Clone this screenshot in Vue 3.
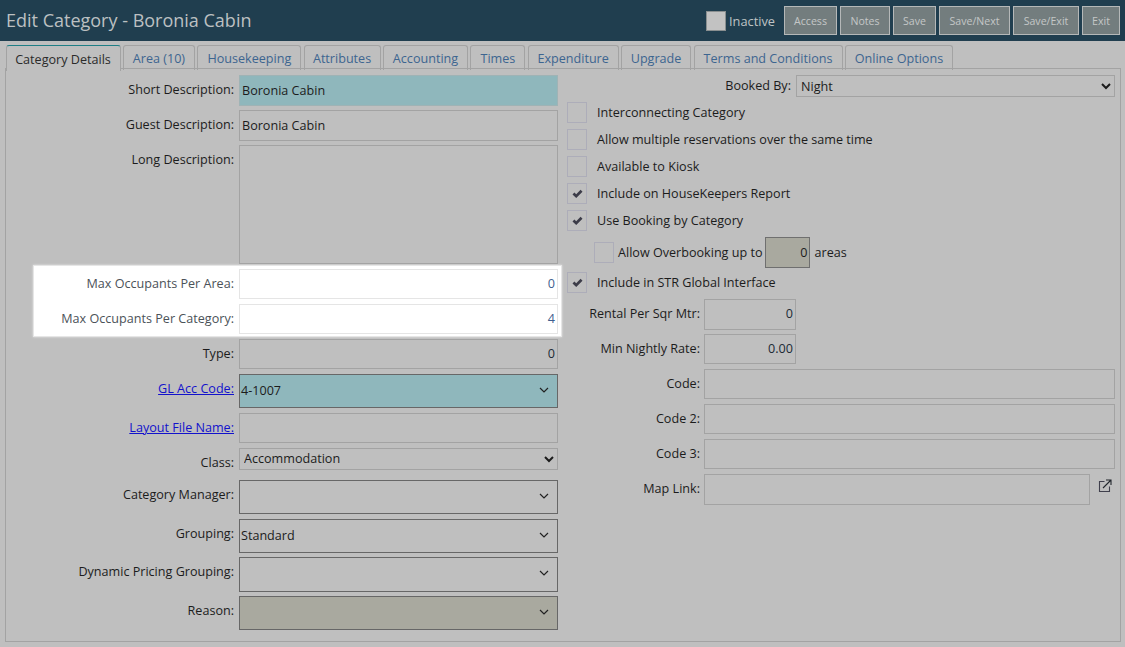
<script setup>
const buttons = [
  { t: 'Access', w: 53 },
  { t: 'Notes', w: 50 },
  { t: 'Save', w: 43 },
  { t: 'Save/Next', w: 71 },
  { t: 'Save/Exit', w: 66 },
  { t: 'Exit', w: 38 }
]
const tabs = [
  { t: 'Category Details', w: 115, active: true },
  { t: 'Area (10)', w: 72.5 },
  { t: 'Housekeeping', w: 104 },
  { t: 'Attributes', w: 77 },
  { t: 'Accounting', w: 85.5 },
  { t: 'Times', w: 55 },
  { t: 'Expenditure', w: 91 },
  { t: 'Upgrade', w: 70.5 },
  { t: 'Terms and Conditions', w: 149 },
  { t: 'Online Options', w: 108.5 }
]
const checks = [
  { t: 'Interconnecting Category', on: false },
  { t: 'Allow multiple reservations over the same time', on: false },
  { t: 'Available to Kiosk', on: false },
  { t: 'Include on HouseKeepers Report', on: true },
  { t: 'Use Booking by Category', on: true }
]
const checkPath = 'M0.5 6 L2.6 3.8 L4.6 5.8 L9.4 0.8 L11.5 3 L4.6 10 Z'
</script>

<template>
  <div class="page">
    <header class="topbar">
      <h1 class="title">Edit Category - Boronia Cabin</h1>
      <div class="actions">
        <span class="inactive-box"></span>
        <span class="inactive-label">Inactive</span>
        <button
          v-for="b in buttons"
          :key="b.t"
          class="btn"
          :style="{ width: b.w + 'px' }"
        >{{ b.t }}</button>
      </div>
    </header>

    <nav class="tabs">
      <a
        v-for="tab in tabs"
        :key="tab.t"
        class="tab"
        :class="{ active: tab.active }"
        :style="{ width: tab.w + 'px' }"
      >{{ tab.t }}</a>
    </nav>

    <main class="panel">
      <section class="col-left">
        <div class="row h31 mb4">
          <label class="lbl">Short Description:</label>
          <div class="field teal-soft txt">Boronia Cabin</div>
        </div>
        <div class="row h31 mb4">
          <label class="lbl">Guest Description:</label>
          <div class="field txt">Boronia Cabin</div>
        </div>
        <div class="row h119">
          <label class="lbl">Long Description:</label>
          <div class="field"></div>
        </div>

        <div class="highlight">
          <div class="row h30 mb5">
            <label class="lbl">Max Occupants Per Area:</label>
            <div class="field num">0</div>
          </div>
          <div class="row h30">
            <label class="lbl">Max Occupants Per Category:</label>
            <div class="field num">4</div>
          </div>
        </div>

        <div class="row h30 mb5">
          <label class="lbl">Type:</label>
          <div class="field num">0</div>
        </div>
        <div class="row h34 mb5">
          <label class="lbl"><a class="link">GL Acc Code:</a></label>
          <div class="combo teal">
            <span class="combo-text">4-1007</span>
            <svg class="chev" viewBox="0 0 10 6"><path d="M1 1 L5 5 L9 1" /></svg>
          </div>
        </div>
        <div class="row h30 mb5">
          <label class="lbl"><a class="link">Layout File Name:</a></label>
          <div class="field"></div>
        </div>
        <div class="row h22 mb10">
          <label class="lbl">Class:</label>
          <select class="native class-sel">
            <option>Accommodation</option>
          </select>
        </div>
        <div class="row h34 mb5">
          <label class="lbl">Category Manager:</label>
          <div class="combo">
            <svg class="chev" viewBox="0 0 10 6"><path d="M1 1 L5 5 L9 1" /></svg>
          </div>
        </div>
        <div class="row h34 mb4">
          <label class="lbl">Grouping:</label>
          <div class="combo">
            <span class="combo-text">Standard</span>
            <svg class="chev" viewBox="0 0 10 6"><path d="M1 1 L5 5 L9 1" /></svg>
          </div>
        </div>
        <div class="row h35 mb4">
          <label class="lbl">Dynamic Pricing Grouping:</label>
          <div class="combo">
            <svg class="chev" viewBox="0 0 10 6"><path d="M1 1 L5 5 L9 1" /></svg>
          </div>
        </div>
        <div class="row h34">
          <label class="lbl">Reason:</label>
          <div class="combo khaki">
            <svg class="chev" viewBox="0 0 10 6"><path d="M1 1 L5 5 L9 1" /></svg>
          </div>
        </div>
      </section>

      <section class="col-right">
        <div class="booked">
          <label class="booked-lbl">Booked By:</label>
          <select class="native booked-sel">
            <option>Night</option>
          </select>
        </div>

        <div v-for="c in checks" :key="c.t" class="check-row">
          <span class="box">
            <svg v-if="c.on" class="tick" viewBox="0 0 12 11"><path :d="checkPath" /></svg>
          </span>
          <span class="check-text">{{ c.t }}</span>
        </div>

        <div class="over-row">
          <span class="box"></span>
          <span class="over-text">Allow Overbooking up to</span>
          <div class="over-input">0</div>
          <span class="over-after">areas</span>
        </div>

        <div class="check-row str">
          <span class="box">
            <svg class="tick" viewBox="0 0 12 11"><path :d="checkPath" /></svg>
          </span>
          <span class="check-text">Include in STR Global Interface</span>
        </div>

        <div class="rrow h31 mb4">
          <label class="rlbl">Rental Per Sqr Mtr:</label>
          <div class="field num short">0</div>
        </div>
        <div class="rrow h30 mb5">
          <label class="rlbl">Min Nightly Rate:</label>
          <div class="field num short">0.00</div>
        </div>
        <div class="rrow h30 mb5">
          <label class="rlbl">Code:</label>
          <div class="field wide"></div>
        </div>
        <div class="rrow h30 mb5">
          <label class="rlbl">Code 2:</label>
          <div class="field wide"></div>
        </div>
        <div class="rrow h30 mb5">
          <label class="rlbl">Code 3:</label>
          <div class="field wide"></div>
        </div>
        <div class="rrow h31">
          <label class="rlbl">Map Link:</label>
          <div class="field map"></div>
          <svg class="ext" viewBox="0 0 14 14">
            <path class="ext-box" d="M6.5 2.5 H1.5 V12.5 H11.5 V7.5" />
            <path class="ext-arrow" d="M5 9 L12.5 1.5 M8 1 H13 V6" />
          </svg>
        </div>
      </section>
    </main>
  </div>
</template>

<style>
html, body { margin: 0; background: #bfbfbf; }
</style>

<style scoped>
.page {
  width: 1125px;
  height: 647px;
  overflow: hidden;
  background: #bfbfbf;
  font-family: "Open Sans", "Liberation Sans", sans-serif;
  font-size: 12.6px;
  color: #1c1c1c;
}
.topbar {
  height: 41px;
  background: #203e4f;
  display: flex;
  align-items: flex-start;
  justify-content: space-between;
}
.title {
  margin: 0;
  padding: 7px 0 0 6px;
  font-size: 18px;
  line-height: 26px;
  font-weight: 400;
  color: #bcc0c2;
}
.actions {
  display: flex;
  align-items: center;
  padding: 6px 5px 0 0;
}
.inactive-box {
  width: 18px;
  height: 18px;
  border: 1px solid #8a8f90;
  background: #c2c2c2;
}
.inactive-label {
  width: 46px;
  margin: 0 9px 0 3px;
  color: #bfc3c4;
  font-size: 12.8px;
  line-height: 20px;
  white-space: nowrap;
}
.btn {
  box-sizing: border-box;
  height: 29px;
  margin-left: 3px;
  padding: 0;
  border: 1px solid #b5b8b8;
  background: #737d7e;
  color: #c4c7c7;
  font: 400 10.6px "Open Sans", sans-serif;
}
.btn:first-of-type { margin-left: 0; }
.tabs {
  display: flex;
  gap: 2.2px;
  height: 28px;
  padding: 4px 0 0 5.5px;
  box-sizing: border-box;
  position: relative;
  z-index: 1;
}
.tab {
  box-sizing: border-box;
  height: 25px;
  border: 1px solid #a3a3a3;
  border-bottom: 0;
  border-radius: 3px 3px 0 0;
  text-align: center;
  line-height: 25px;
  color: #3d6590;
  white-space: nowrap;
}
.tab.active {
  height: 26px;
  border-top: 1px solid #1f7f86;
  background: #bfbfbf;
  color: #2b2b2b;
  line-height: 27px;
}
.panel {
  box-sizing: border-box;
  width: 1116px;
  height: 574px;
  margin: -1px 0 0 5px;
  border: 1px solid #a3a3a3;
  display: flex;
  padding-top: 6px;
}
.col-left { width: 556px; }
.col-right { margin-left: 5px; width: 548px; }

.row {
  display: grid;
  grid-template-columns: 233px 319px;
}
.lbl {
  box-sizing: border-box;
  padding: 6px 5px 0 0;
  line-height: 18px;
  text-align: right;
  white-space: nowrap;
}
.link { color: #1212cc; text-decoration: underline; }
.h22 { height: 22px; }
.h30 { height: 30px; }
.h31 { height: 31px; }
.h34 { height: 34px; }
.h35 { height: 35px; }
.h119 { height: 119px; }
.mb4 { margin-bottom: 4px; }
.mb5 { margin-bottom: 5px; }
.mb10 { margin-bottom: 10px; }

.field {
  box-sizing: border-box;
  height: 100%;
  border: 1px solid #a3a3a3;
  padding: 0 2px;
  line-height: 28px;
  white-space: nowrap;
}
.txt { line-height: 29px; }
.teal-soft { background: #8fb7bc; border-color: #9fb3b5; }
.num { text-align: right; color: #202a36; }
.combo {
  box-sizing: border-box;
  height: 100%;
  border: 1px solid #676767;
  display: flex;
  align-items: center;
  position: relative;
  padding-left: 1px;
}
.combo-text { position: relative; top: -1px; }
.teal { background: #8fb7bc; }
.khaki { background: #a9a99f; }
.chev {
  position: absolute;
  right: 8px;
  top: 12px;
  width: 10px;
  height: 6px;
  fill: none;
  stroke: #222;
  stroke-width: 1.2;
}
.native {
  box-sizing: border-box;
  width: 100%;
  height: 22px;
  border: 1px solid #a3a3a3;
  border-radius: 0;
  background: transparent;
  color: #1c1c1c;
  font: 400 12.6px "Open Sans", sans-serif;
  padding: 0;
}
.class-sel { padding-bottom: 2px; }

.highlight {
  box-sizing: border-box;
  width: 529px;
  height: 72px;
  margin: 1px 0 2px 27px;
  padding-top: 3px;
  background: #fff;
  border: 1px solid #e6e6e6;
  box-shadow: 0 0 2px #e8e8e8;
  color: #4b5258;
}
.highlight .row { grid-template-columns: 205px 319px; }
.highlight .field { border-color: #e5e5e5; background: #fff; border-width: 1px; }
.highlight .num { color: #3f5f8f; }

.booked {
  display: flex;
  height: 22px;
  margin-bottom: 5px;
}
.booked-lbl {
  width: 224px;
  box-sizing: border-box;
  text-align: right;
  line-height: 22px;
}
.booked-sel {
  width: 319px;
  margin-left: 5px;
}
.check-row {
  display: flex;
  align-items: center;
  height: 21px;
  margin-bottom: 6px;
}
.check-row.str { margin-bottom: 6px; }
.box {
  box-sizing: border-box;
  width: 20px;
  height: 21px;
  border: 1px solid #adadb9;
  display: flex;
  align-items: center;
  justify-content: center;
  flex: none;
}
.tick { width: 11px; height: 10px; fill: #3c3c48; }
.check-text { margin-left: 10px; }
.over-row {
  display: flex;
  align-items: center;
  height: 31px;
  margin-bottom: 4px;
  padding-left: 27px;
}
.over-text { margin-left: 4px; white-space: nowrap; }
.over-input {
  box-sizing: border-box;
  width: 45px;
  height: 31px;
  margin-left: 3px;
  border: 1px solid #6f6f6f;
  background: #a9a99f;
  text-align: right;
  line-height: 30px;
  padding-right: 2px;
}
.over-after { margin-left: 4px; }
.rrow {
  display: flex;
}
.rlbl {
  width: 137px;
  box-sizing: border-box;
  padding: 6px 4px 0 0;
  line-height: 18px;
  text-align: right;
  white-space: nowrap;
}
.short { width: 92px; }
.wide { width: 411px; }
.map { width: 386px; }
.ext {
  width: 14px;
  height: 14px;
  margin: 5px 0 0 8px;
  fill: none;
  stroke-width: 1.1;
}
.ext-box { stroke: #3f3f4c; }
.ext-arrow { stroke: #22262c; }
</style>
